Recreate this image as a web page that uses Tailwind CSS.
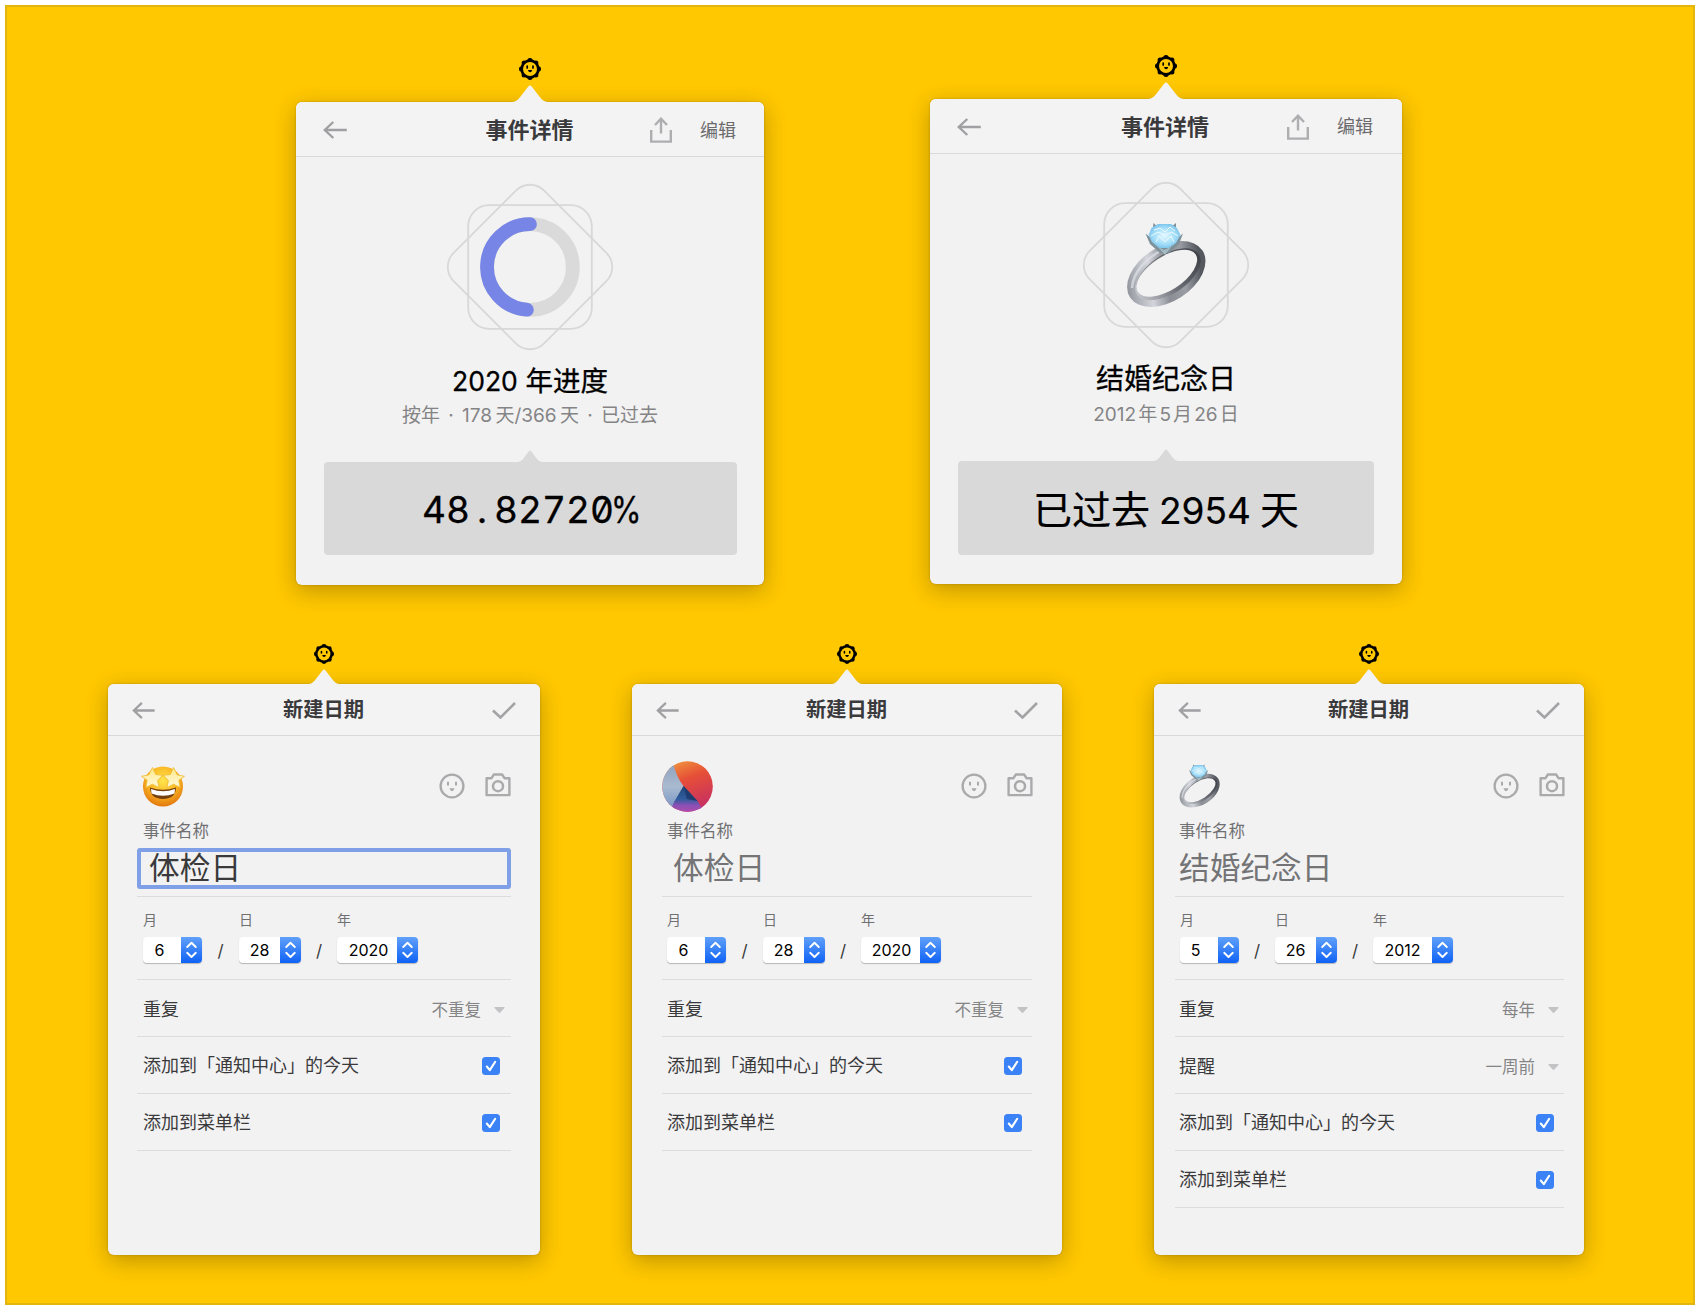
<!DOCTYPE html>
<html lang="zh-CN">
<head>
<meta charset="utf-8">
<title>事件详情</title>
<script src="https://cdn.jsdelivr.net/npm/@tailwindcss/browser@4"></script>
</head>
<body class="bg-white font-['Inter','Noto_Sans_CJK_SC',sans-serif] text-[#3a3a3c]">

<svg class="absolute w-0 h-0">
  <defs>
    <linearGradient id="metal" x1="0" y1="0" x2="1" y2="0.3"><stop offset="0" stop-color="#6d7178"/><stop offset=".18" stop-color="#a3a6ad"/><stop offset=".4" stop-color="#d3d5db"/><stop offset=".6" stop-color="#8b8f95"/><stop offset=".8" stop-color="#9a9da3"/><stop offset="1" stop-color="#55585e"/></linearGradient>
    <linearGradient id="metalIn" x1="0" y1="0" x2="1" y2="0"><stop offset="0" stop-color="#c3c5cb"/><stop offset=".5" stop-color="#6b6e75"/><stop offset="1" stop-color="#3f4248"/></linearGradient>
    <radialGradient id="gem" cx=".5" cy=".5" r=".55"><stop offset="0" stop-color="#e2f7ff"/><stop offset=".6" stop-color="#a5dff9"/><stop offset="1" stop-color="#76bfe9"/></radialGradient>
    <radialGradient id="face" cx=".5" cy=".35" r=".68"><stop offset="0" stop-color="#ffe64d"/><stop offset=".55" stop-color="#f9b522"/><stop offset="1" stop-color="#e0700c"/></radialGradient>
    <linearGradient id="starFill" x1="0" y1="0" x2="0" y2="1"><stop offset="0" stop-color="#ffe98a"/><stop offset="1" stop-color="#fff9dc"/></linearGradient>
    <linearGradient id="wallRed" x1=".2" y1="0" x2=".6" y2="1"><stop offset="0" stop-color="#f0983e"/><stop offset=".4" stop-color="#e64f37"/><stop offset="1" stop-color="#c62f63"/></linearGradient>
    <linearGradient id="wallGrey" x1="0" y1="0" x2="0" y2="1"><stop offset="0" stop-color="#8d9fbd"/><stop offset=".5" stop-color="#a9bad0"/><stop offset="1" stop-color="#6f8fc4"/></linearGradient>
    <linearGradient id="wallBlue" x1="0" y1="0" x2="0" y2="1"><stop offset="0" stop-color="#1f4a7c"/><stop offset=".5" stop-color="#2f5c9c"/><stop offset=".75" stop-color="#8c4fb5"/><stop offset="1" stop-color="#b04cab"/></linearGradient>
    <linearGradient id="stepper" x1="0" y1="0" x2="0" y2="1"><stop offset="0" stop-color="#5fa0fa"/><stop offset="1" stop-color="#0f62f5"/></linearGradient>
    <clipPath id="disc"><circle cx="25.5" cy="25.5" r="25.3"/></clipPath>
  </defs>
  <symbol id="sun" viewBox="0 0 24 24">
    <circle cx="12" cy="12" r="9.7"/>
    <circle cx="12" cy="3.7" r="2.7"/><circle cx="12" cy="20.3" r="2.7"/><circle cx="3.7" cy="12" r="2.7"/><circle cx="20.3" cy="12" r="2.7"/>
    <circle cx="6.1" cy="6.1" r="2.5"/><circle cx="17.9" cy="6.1" r="2.5"/><circle cx="6.1" cy="17.9" r="2.5"/><circle cx="17.9" cy="17.9" r="2.5"/>
    <circle cx="12" cy="12" r="7" fill="#ffc800"/>
    <path d="M9.2 9.2v1.8M15 9.2v1.8" stroke="#000" stroke-width="1.7" stroke-linecap="round"/>
    <path d="M10 13h4.2l-.6 1.5q-1.5 1.3-3 0z"/>
  </symbol>
  <symbol id="caret" viewBox="0 0 36 18"><path d="M0 17C4 17 6 14.6 8 12.3L16.3 1.6Q18 -.6 19.7 1.6L28 12.3C30 14.6 32 17 36 17V18H0z" fill="#f3f3f4"/></symbol>
  <symbol id="notch" viewBox="0 0 24 12"><path d="M0 12Q3 11.600 5 9L11 1Q12 0 13 1L19 9Q21 11.600 24 12z" fill="#d9d9d9"/></symbol>
  <symbol id="back" viewBox="0 0 24 18"><path d="M23.800 9H1.800M10.300 1L1.800 9l8.500 8" fill="none" stroke="#a0a0a2" stroke-width="2.400"/></symbol>
  <symbol id="share" viewBox="0 0 22 26"><path d="M1.200 13v11.600h19.600V13M11 16.500V2M5 8l6-6.300L17 8" fill="none" stroke="#aeaeb0" stroke-width="2.400"/></symbol>
  <symbol id="tick" viewBox="0 0 24 17"><path d="M1 8.500l7.500 7L23 1" fill="none" stroke="#a3a3a5" stroke-width="2.600"/></symbol>
  <symbol id="smile" viewBox="0 0 26 26"><circle cx="13" cy="13" r="11.400" fill="none" stroke="#aaaaac" stroke-width="2.300"/><path d="M9 8.800v3.600M17 8.800v3.600" stroke="#aaaaac" stroke-width="2"/><path d="M10.400 15.300h5.200L14 18h-2z" fill="#aaaaac"/></symbol>
  <symbol id="camera" viewBox="0 0 26 24"><path d="M1.600 5.200H6.500L8.900 1.500h8.200l2.400 3.700h4.900v16.900H1.600z" fill="none" stroke="#aaaaac" stroke-width="2.400" stroke-linejoin="round"/><circle cx="13" cy="13.200" r="5" fill="none" stroke="#aaaaac" stroke-width="2.500"/></symbol>
  <symbol id="star" viewBox="0 0 172 172"><g fill="none" stroke="#d8d8d8" stroke-width="1.800"><rect x="24.200" y="24.200" width="123.600" height="123.600" rx="21"/><rect x="22" y="22" width="128" height="128" rx="20" transform="rotate(45 86 86)"/></g></symbol>
  <symbol id="ring" viewBox="0 0 80 86">
    <ellipse cx="40.300" cy="52" rx="43.200" ry="27.500" transform="rotate(-33 40.300 52)" fill="url(#metal)"/>
    <ellipse cx="41.800" cy="52.300" rx="37" ry="19.500" transform="rotate(-33 41.800 52.300)" fill="url(#metalIn)"/>
    <ellipse cx="40.800" cy="51.300" rx="34.500" ry="16.800" transform="rotate(-33 40.800 51.300)" fill="#f2f2f2"/>
    <path d="M6 66C7 50 20 36 38 27" fill="none" stroke="#dfe1e8" stroke-width="2.500" opacity=".7"/>
    <path d="M19.500 11.500L24 22 34 31 43 31 53 22 57 11.500 47 20 30 20z" fill="#7f9099"/>
    <path d="M27 5L27.500 1 32 5zM45 5L50 1 50 5z" fill="#7f9099"/>
    <path d="M25.500 6L32 2H45L51 6 54.500 13 50 21 43 26H33L26 20 22.500 13z" fill="url(#gem)"/>
    <path d="M28 8l6-2 5 4 5-5 5 4M25 14l7-4 7 3 7-3 6 4M30 20l3-6 6 6 6-6 3 6" fill="none" stroke="#ecfaff" stroke-width="1"/>
    <path d="M32 25l6 3 7-3-6 8z" fill="#a3bcc4"/>
  </symbol>
  <symbol id="starstruck" viewBox="0 0 44 42">
    <circle cx="22" cy="21.500" r="20" fill="url(#face)"/>
    <path d="M9 22.500Q22 27 35 22.500Q35 33.500 22 34Q9 33.500 9 22.500z" fill="#76400f"/>
    <path d="M10 24Q22 28.500 34 24L33.500 28.500Q22 33 10.500 28.500z" fill="#fff"/>
    <path d="M11.500 2.500l3.200 7 7.200.8-5.300 5.200 1.500 7.200-6.600-3.500-6.600 3.200 1.200-7.200-5.600-3.900 7.200-1.400z" fill="url(#starFill)" stroke="#efb92c" stroke-width=".8"/>
    <path d="M32.500 2.500l-3.200 7-7.200.8 5.300 5.200-1.500 7.200 6.600-3.500 6.600 3.200-1.200-7.200 5.600-3.900-7.200-1.400z" fill="url(#starFill)" stroke="#efb92c" stroke-width=".8"/>
  </symbol>
  <symbol id="wallpaper" viewBox="0 0 51 51">
    <g clip-path="url(#disc)"><rect width="51" height="51" fill="url(#wallRed)"/><path d="M11 0Q13 14 21.500 25L12 43 8 51H0V0z" fill="url(#wallGrey)"/><path d="M21.500 25L35.500 40 42 51H8L12 41z" fill="url(#wallBlue)"/><path d="M21.500 25L35.500 40 25 38z" fill="#1f3c70"/></g>
  </symbol>
  <symbol id="updown" viewBox="0 0 21 26"><rect width="21" height="26" fill="url(#stepper)"/><path d="M6.200 10L10.500 5.800 14.800 10M6.200 15.800L10.500 20l4.300-4.200" fill="none" stroke="#fff" stroke-width="1.900" stroke-linecap="round" stroke-linejoin="round"/></symbol>
  <symbol id="down" viewBox="0 0 11 6"><path d="M1 0h9q1 .3.500 1L6.300 5.600q-.8.600-1.600 0L.5 1Q0 .3 1 0z" fill="#c3c3c5"/></symbol>
  <symbol id="checked" viewBox="0 0 18 18"><rect width="18" height="18" rx="3.500" fill="#3b82f6"/><path d="M4.800 9.500l3 3.600L13.200 4.800" fill="none" stroke="#fff" stroke-width="2.100" stroke-linecap="round" stroke-linejoin="round"/></symbol>
</svg>

<div class="w-[1700px] h-[1310px] overflow-hidden p-[5px]">
<main class="w-[1690px] h-[1300px] border-2 border-[#e3b60f] bg-[#ffc800]">

  <div class="flex items-start h-[636px] pl-[289px] gap-[166px]">
    <!-- 2020 progress -->
    <div class="flex flex-col items-center w-[468px] pt-[50px]">
      <svg class="w-6 h-6"><use href="#sun"/></svg>
      <svg class="w-9 h-[18px] mt-1 -mb-px z-10"><use href="#caret"/></svg>
      <section class="flex flex-col items-center w-full h-[483px] bg-[#f2f2f2] rounded-[6px] shadow-[0_6px_22px_rgba(60,40,0,0.32),0_0_2px_rgba(60,40,0,0.3)]">
        <header class="grid grid-cols-[1fr_auto_1fr] items-center w-full h-[55px] shrink-0 bg-[#f3f3f4] border-b border-[#d9d9db] rounded-t-[6px] pt-0.5 pl-[27px] pr-7">
          <svg class="w-6 h-[18px]"><use href="#back"/></svg>
          <h1 class="text-[22px] leading-8 font-bold">事件详情</h1>
          <div class="flex items-center justify-end gap-7"><svg class="w-[22px] h-[26px]"><use href="#share"/></svg><span class="pt-px text-[18px] leading-7 text-[#6b6b6d]">编辑</span></div>
        </header>
        <svg class="w-[172px] h-[172px] mt-6 shrink-0" viewBox="0 0 172 172"><use href="#star"/><circle cx="86" cy="86" r="42.800" fill="none" stroke="#dadada" stroke-width="13.800"/><path d="M86 43.200A42.800 42.800 0 0 0 82.900 128.700" fill="none" stroke="#7785e6" stroke-width="13.800" stroke-linecap="round"/></svg>
        <h2 class="mt-[10px] text-[27.5px] leading-9 text-black whitespace-nowrap [-webkit-text-stroke:0.3px_#000]"><span class="text-[26.500px]">2020</span> 年进度</h2>
        <p class="mt-[3px] text-[19px] leading-7 text-[#848486] whitespace-nowrap [word-spacing:-2px]">按年 <span class="mx-[5px]">·</span> 178 天/366 天 <span class="mx-[5px]">·</span> 已过去</p>
        <svg class="w-6 h-3 mt-5"><use href="#notch"/></svg>
        <div class="flex items-center justify-center w-[413px] h-[93px] pt-0.5 bg-[#d9d9d9] rounded-[4px] text-[37px] leading-none text-black [-webkit-text-stroke:0.3px_#000] [font-feature-settings:'tnum','zero']"><span>48</span><span class="w-[24px] text-center">.</span><span>82720</span><span class="w-[24px] flex justify-center"><span class="inline-block scale-x-[0.84]">%</span></span></div>
      </section>
    </div>

    <!-- Wedding anniversary -->
    <div class="flex flex-col items-center w-[472px] pt-[47px]">
      <svg class="w-6 h-6"><use href="#sun"/></svg>
      <svg class="w-9 h-[18px] mt-1 -mb-px z-10"><use href="#caret"/></svg>
      <section class="flex flex-col items-center w-full h-[485px] bg-[#f2f2f2] rounded-[6px] shadow-[0_6px_22px_rgba(60,40,0,0.32),0_0_2px_rgba(60,40,0,0.3)]">
        <header class="grid grid-cols-[1fr_auto_1fr] items-center w-full h-[55px] shrink-0 bg-[#f3f3f4] border-b border-[#d9d9db] rounded-t-[6px] pt-px pl-[27px] pr-[29px]">
          <svg class="w-6 h-[18px]"><use href="#back"/></svg>
          <h1 class="text-[22px] leading-8 font-bold">事件详情</h1>
          <div class="flex items-center justify-end gap-7"><svg class="w-[22px] h-[26px]"><use href="#share"/></svg><span class="pt-px text-[18px] leading-7 text-[#6b6b6d]">编辑</span></div>
        </header>
        <div class="grid place-items-center w-[172px] h-[172px] mt-[25px] shrink-0"><svg class="col-start-1 row-start-1 w-[172px] h-[172px]"><use href="#star"/></svg><svg class="col-start-1 row-start-1 w-20 h-[86px]"><use href="#ring"/></svg></div>
        <h2 class="mt-[10px] text-[28px] leading-9 text-black [-webkit-text-stroke:0.3px_#000]">结婚纪念日</h2>
        <p class="mt-1 text-[19px] leading-7 text-[#848486] whitespace-nowrap [word-spacing:-3.2px]">2012 年 5 月 26 日</p>
        <svg class="w-6 h-3 mt-5"><use href="#notch"/></svg>
        <div class="flex items-center justify-center w-[416px] h-[94px] pt-[3px] bg-[#d9d9d9] rounded-[4px] text-[39px] leading-none text-black whitespace-nowrap [word-spacing:-2px] [-webkit-text-stroke:0.2px_#000]"><p>已过去 <span class="text-[37px]">2954</span> 天</p></div>
      </section>
    </div>
  </div>

  <div class="flex items-start pl-[101px]">
    <!-- Editing the name -->
    <div class="flex flex-col items-center w-[432px]">
      <svg class="w-[22px] h-[22px]"><use href="#sun"/></svg>
      <svg class="w-8 h-4 mt-1 -mb-px z-10"><use href="#caret"/></svg>
      <section class="w-full h-[571px] bg-[#f2f2f2] rounded-[6px] shadow-[0_6px_22px_rgba(60,40,0,0.32),0_0_2px_rgba(60,40,0,0.3)]">
        <header class="flex items-center justify-between h-[52px] bg-[#f3f3f4] border-b border-[#d9d9db] rounded-t-[6px] pt-px px-6">
          <svg class="w-[23px] h-[17px]"><use href="#back"/></svg>
          <h1 class="text-[20.300px] leading-7 font-bold">新建日期</h1>
          <svg class="w-6 h-[17px]"><use href="#tick"/></svg>
        </header>
        <div class="px-[29px]">
          <div class="flex items-center h-[52px] mt-6 pl-1">
            <svg class="w-11 h-[42px]"><use href="#starstruck"/></svg>
            <svg class="w-[26px] h-[26px] ml-auto"><use href="#smile"/></svg>
            <svg class="w-[26px] h-6 ml-5 -mt-0.5"><use href="#camera"/></svg>
          </div>
          <p class="mt-[7px] pl-[6px] text-[16.500px] leading-6 text-[#707072]">事件名称</p>
          <div class="flex items-center h-[41px] mt-[5px] border-4 border-[#7fa0e6] rounded-[3px] pl-2 text-[30.700px] leading-none">体检日</div>
          <div class="mt-[7px] border-y border-[#dcdcde] h-[84px] pt-[13px] pl-[6px] flex items-start">
            <div class="w-[59px]"><p class="text-[14px] leading-5 text-[#707072]">月</p><div class="flex h-[26px] mt-[7px] bg-white rounded-[4px] overflow-hidden shadow-[0_1px_1px_rgba(0,0,0,0.25)]"><span class="grow text-center pr-[5px] text-[16px] leading-[26px] text-black">6</span><svg class="w-[21px] h-[26px]"><use href="#updown"/></svg></div></div>
            <span class="w-[37px] mt-[28px] text-center text-[17px] leading-[26px]">/</span>
            <div class="w-[62px]"><p class="text-[14px] leading-5 text-[#707072]">日</p><div class="flex h-[26px] mt-[7px] bg-white rounded-[4px] overflow-hidden shadow-[0_1px_1px_rgba(0,0,0,0.25)]"><span class="grow text-center text-[16px] leading-[26px] text-black">28</span><svg class="w-[21px] h-[26px]"><use href="#updown"/></svg></div></div>
            <span class="w-[36px] mt-[28px] text-center text-[17px] leading-[26px]">/</span>
            <div class="w-[81px]"><p class="text-[14px] leading-5 text-[#707072]">年</p><div class="flex h-[26px] mt-[7px] bg-white rounded-[4px] overflow-hidden shadow-[0_1px_1px_rgba(0,0,0,0.25)]"><span class="grow text-center pl-[3px] text-[16px] leading-[26px] text-black">2020</span><svg class="w-[21px] h-[26px]"><use href="#updown"/></svg></div></div>
          </div>
          <div class="flex items-center h-[57px] border-b border-[#dcdcde] pt-[3px] pl-[6px] pr-[6px] text-[18px] leading-7"><span>重复</span><span class="ml-auto text-[16.500px] text-[#848486]">不重复</span><svg class="w-[11px] h-1.5 ml-[13px]"><use href="#down"/></svg></div>
          <div class="flex items-center justify-between h-[57px] border-b border-[#dcdcde] pt-0.5 pl-[6px] pr-[11px] text-[18px] leading-7"><span>添加到「通知中心」的今天</span><svg class="w-[18px] h-[18px]"><use href="#checked"/></svg></div>
          <div class="flex items-center justify-between h-[57px] border-b border-[#dcdcde] pt-0.5 pl-[6px] pr-[11px] text-[18px] leading-7"><span>添加到菜单栏</span><svg class="w-[18px] h-[18px]"><use href="#checked"/></svg></div>
        </div>
      </section>
    </div>

    <!-- Custom picture -->
    <div class="flex flex-col items-center w-[430px] ml-[92px]">
      <svg class="w-[22px] h-[22px]"><use href="#sun"/></svg>
      <svg class="w-8 h-4 mt-1 -mb-px z-10"><use href="#caret"/></svg>
      <section class="w-full h-[571px] bg-[#f2f2f2] rounded-[6px] shadow-[0_6px_22px_rgba(60,40,0,0.32),0_0_2px_rgba(60,40,0,0.3)]">
        <header class="flex items-center justify-between h-[52px] bg-[#f3f3f4] border-b border-[#d9d9db] rounded-t-[6px] pt-px px-6">
          <svg class="w-[23px] h-[17px]"><use href="#back"/></svg>
          <h1 class="text-[20.300px] leading-7 font-bold">新建日期</h1>
          <svg class="w-6 h-[17px]"><use href="#tick"/></svg>
        </header>
        <div class="px-[30px]">
          <div class="flex items-center h-[52px] mt-6 -mr-px">
            <svg class="w-[51px] h-[51px]"><use href="#wallpaper"/></svg>
            <svg class="w-[26px] h-[26px] ml-auto"><use href="#smile"/></svg>
            <svg class="w-[26px] h-6 ml-5 -mt-0.5"><use href="#camera"/></svg>
          </div>
          <p class="mt-[7px] pl-[5px] text-[16.500px] leading-6 text-[#707072]">事件名称</p>
          <div class="flex items-center h-[41px] mt-[5px] pl-[11px] text-[30.700px] leading-none text-[#747476]">体检日</div>
          <div class="mt-[7px] border-y border-[#dcdcde] h-[84px] pt-[13px] pl-[5px] flex items-start">
            <div class="w-[59px]"><p class="text-[14px] leading-5 text-[#707072]">月</p><div class="flex h-[26px] mt-[7px] bg-white rounded-[4px] overflow-hidden shadow-[0_1px_1px_rgba(0,0,0,0.25)]"><span class="grow text-center pr-[5px] text-[16px] leading-[26px] text-black">6</span><svg class="w-[21px] h-[26px]"><use href="#updown"/></svg></div></div>
            <span class="w-[37px] mt-[28px] text-center text-[17px] leading-[26px]">/</span>
            <div class="w-[62px]"><p class="text-[14px] leading-5 text-[#707072]">日</p><div class="flex h-[26px] mt-[7px] bg-white rounded-[4px] overflow-hidden shadow-[0_1px_1px_rgba(0,0,0,0.25)]"><span class="grow text-center text-[16px] leading-[26px] text-black">28</span><svg class="w-[21px] h-[26px]"><use href="#updown"/></svg></div></div>
            <span class="w-[36px] mt-[28px] text-center text-[17px] leading-[26px]">/</span>
            <div class="w-[80px]"><p class="text-[14px] leading-5 text-[#707072]">年</p><div class="flex h-[26px] mt-[7px] bg-white rounded-[4px] overflow-hidden shadow-[0_1px_1px_rgba(0,0,0,0.25)]"><span class="grow text-center pl-0.5 text-[16px] leading-[26px] text-black">2020</span><svg class="w-[21px] h-[26px]"><use href="#updown"/></svg></div></div>
          </div>
          <div class="flex items-center h-[57px] border-b border-[#dcdcde] pt-[3px] pl-[5px] pr-[4px] text-[18px] leading-7"><span>重复</span><span class="ml-auto text-[16.500px] text-[#848486]">不重复</span><svg class="w-[11px] h-1.5 ml-[13px]"><use href="#down"/></svg></div>
          <div class="flex items-center justify-between h-[57px] border-b border-[#dcdcde] pt-0.5 pl-[5px] pr-[10px] text-[18px] leading-7"><span>添加到「通知中心」的今天</span><svg class="w-[18px] h-[18px]"><use href="#checked"/></svg></div>
          <div class="flex items-center justify-between h-[57px] border-b border-[#dcdcde] pt-0.5 pl-[5px] pr-[10px] text-[18px] leading-7"><span>添加到菜单栏</span><svg class="w-[18px] h-[18px]"><use href="#checked"/></svg></div>
        </div>
      </section>
    </div>

    <!-- Yearly reminder -->
    <div class="flex flex-col items-center w-[430px] ml-[92px]">
      <svg class="w-[22px] h-[22px]"><use href="#sun"/></svg>
      <svg class="w-8 h-4 mt-1 -mb-px z-10"><use href="#caret"/></svg>
      <section class="w-full h-[571px] bg-[#f2f2f2] rounded-[6px] shadow-[0_6px_22px_rgba(60,40,0,0.32),0_0_2px_rgba(60,40,0,0.3)]">
        <header class="flex items-center justify-between h-[52px] bg-[#f3f3f4] border-b border-[#d9d9db] rounded-t-[6px] pt-px px-6">
          <svg class="w-[23px] h-[17px]"><use href="#back"/></svg>
          <h1 class="text-[20.300px] leading-7 font-bold">新建日期</h1>
          <svg class="w-6 h-[17px]"><use href="#tick"/></svg>
        </header>
        <div class="pl-[21px] pr-5">
          <div class="flex items-center h-[52px] mt-6 -mr-px pl-1">
            <svg class="w-[41px] h-[44px]"><use href="#ring"/></svg>
            <svg class="w-[26px] h-[26px] ml-auto"><use href="#smile"/></svg>
            <svg class="w-[26px] h-6 ml-5 -mt-0.5"><use href="#camera"/></svg>
          </div>
          <p class="mt-[7px] pl-[4px] text-[16.500px] leading-6 text-[#707072]">事件名称</p>
          <div class="flex items-center h-[41px] mt-[5px] pl-1 text-[30.700px] leading-none text-[#747476]">结婚纪念日</div>
          <div class="mt-[7px] border-y border-[#dcdcde] h-[84px] pt-[13px] pl-[5px] flex items-start">
            <div class="w-[59px]"><p class="text-[14px] leading-5 text-[#707072]">月</p><div class="flex h-[26px] mt-[7px] bg-white rounded-[4px] overflow-hidden shadow-[0_1px_1px_rgba(0,0,0,0.25)]"><span class="grow text-center pr-[7px] text-[16px] leading-[26px] text-black">5</span><svg class="w-[21px] h-[26px]"><use href="#updown"/></svg></div></div>
            <span class="w-[36px] mt-[28px] text-center text-[17px] leading-[26px]">/</span>
            <div class="w-[62px]"><p class="text-[14px] leading-5 text-[#707072]">日</p><div class="flex h-[26px] mt-[7px] bg-white rounded-[4px] overflow-hidden shadow-[0_1px_1px_rgba(0,0,0,0.25)]"><span class="grow text-center text-[16px] leading-[26px] text-black">26</span><svg class="w-[21px] h-[26px]"><use href="#updown"/></svg></div></div>
            <span class="w-[36px] mt-[28px] text-center text-[17px] leading-[26px]">/</span>
            <div class="w-[80px]"><p class="text-[14px] leading-5 text-[#707072]">年</p><div class="flex h-[26px] mt-[7px] bg-white rounded-[4px] overflow-hidden shadow-[0_1px_1px_rgba(0,0,0,0.25)]"><span class="grow text-center text-[16px] leading-[26px] text-black">2012</span><svg class="w-[21px] h-[26px]"><use href="#updown"/></svg></div></div>
          </div>
          <div class="flex items-center h-[57px] border-b border-[#dcdcde] pt-[3px] pl-[4px] pr-[5px] text-[18px] leading-7"><span>重复</span><span class="ml-auto text-[16.500px] text-[#848486]">每年</span><svg class="w-[11px] h-1.5 ml-[13px]"><use href="#down"/></svg></div>
          <div class="flex items-center h-[57px] border-b border-[#dcdcde] pt-[3px] pl-[4px] pr-[5px] text-[18px] leading-7"><span>提醒</span><span class="ml-auto text-[16.500px] text-[#848486]">一周前</span><svg class="w-[11px] h-1.5 ml-[13px]"><use href="#down"/></svg></div>
          <div class="flex items-center justify-between h-[57px] border-b border-[#dcdcde] pt-0.5 pl-[4px] pr-[10px] text-[18px] leading-7"><span>添加到「通知中心」的今天</span><svg class="w-[18px] h-[18px]"><use href="#checked"/></svg></div>
          <div class="flex items-center justify-between h-[57px] border-b border-[#dcdcde] pt-0.5 pl-[4px] pr-[10px] text-[18px] leading-7"><span>添加到菜单栏</span><svg class="w-[18px] h-[18px]"><use href="#checked"/></svg></div>
        </div>
      </section>
    </div>
  </div>
</main>
</div>
</body>
</html>
